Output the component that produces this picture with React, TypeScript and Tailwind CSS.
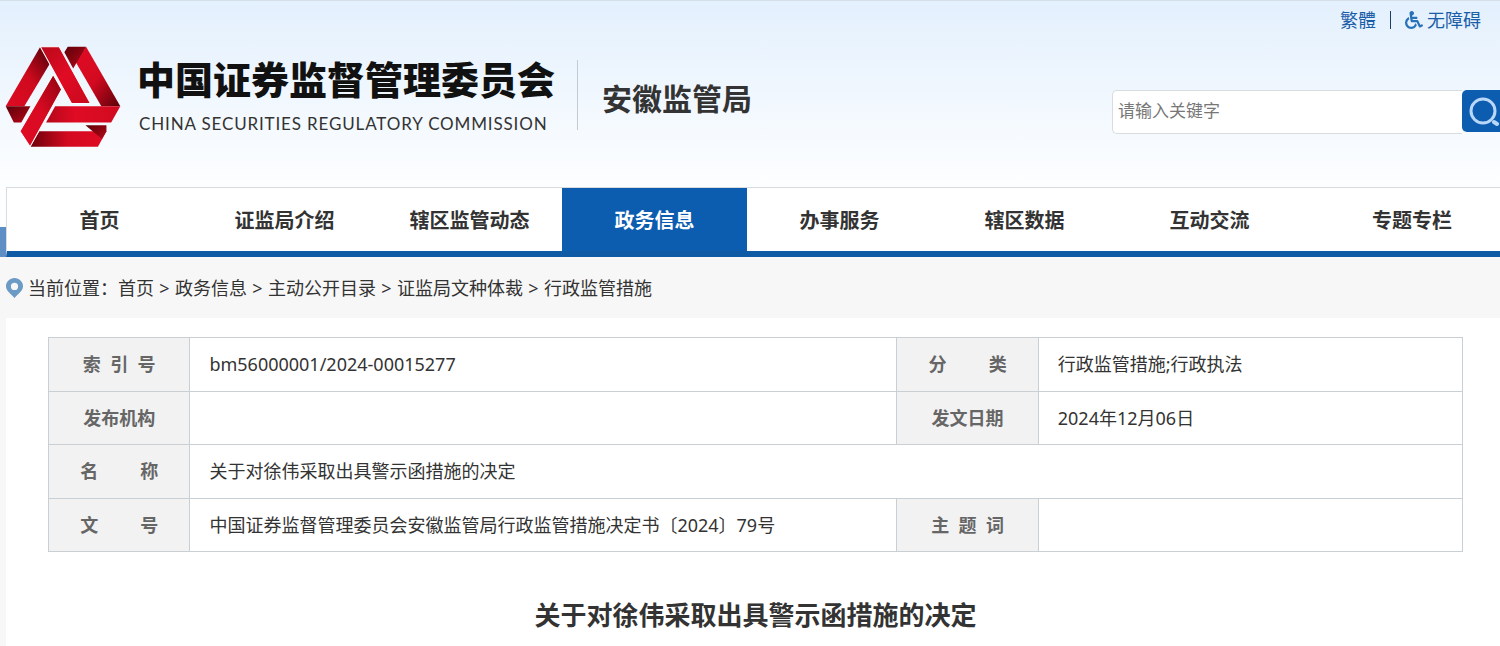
import { FaWheelchair } from "react-icons/fa";

const navItems = [
  "首页",
  "证监局介绍",
  "辖区监管动态",
  "政务信息",
  "办事服务",
  "辖区数据",
  "互动交流",
  "专题专栏",
];

const crumbs = [
  "首页",
  "政务信息",
  "主动公开目录",
  "证监局文种体裁",
  "行政监管措施",
];

const Logo = () => {
  return (
    <svg width="116" height="102" viewBox="18 32 342 300" aria-hidden="true">
      <defs>
        <linearGradient id="left" x1="0" y1="1" x2="1" y2="0">
          <stop offset="0" stopColor="#dd0a22" />
          <stop offset="0.5" stopColor="#cf0a1e" />
          <stop offset="1" stopColor="#4d0006" />
        </linearGradient>
        <linearGradient id="right" x1="0" y1="0" x2="1" y2="1">
          <stop offset="0" stopColor="#e00b24" />
          <stop offset="0.5" stopColor="#d40a20" />
          <stop offset="1" stopColor="#5a0008" />
        </linearGradient>
        <linearGradient id="inner" x1="0" y1="0" x2="1" y2="1">
          <stop offset="0" stopColor="#b8081a" />
          <stop offset="0.5" stopColor="#e00b24" />
          <stop offset="1" stopColor="#c8091d" />
        </linearGradient>
        <linearGradient id="slant" x1="1" y1="0" x2="0" y2="1">
          <stop offset="0" stopColor="#8e0412" />
          <stop offset="0.5" stopColor="#d80a21" />
          <stop offset="1" stopColor="#e00b24" />
        </linearGradient>
        <linearGradient id="bar" x1="0" y1="0" x2="1" y2="0">
          <stop offset="0" stopColor="#b5071a" />
          <stop offset="0.4" stopColor="#e00b24" />
          <stop offset="1" stopColor="#d00a1f" />
        </linearGradient>
        <linearGradient id="base" x1="0" y1="0" x2="1" y2="0">
          <stop offset="0" stopColor="#6d000a" />
          <stop offset="0.5" stopColor="#d40a20" />
          <stop offset="1" stopColor="#e00b24" />
        </linearGradient>
        <linearGradient id="fold" x1="0" y1="0" x2="1" y2="1">
          <stop offset="0" stopColor="#5c0008" />
          <stop offset="1" stopColor="#b8081a" />
        </linearGradient>
      </defs>
      <path d="M122 34L150 84L75 209H20Z" fill="url(#left)" />
      <path d="M20 209H93L66 257H44Z" fill="url(#fold)" />
      <path d="M257 34L358 209H302L226 78Z" fill="url(#right)" />
      <path d="M203 34H257L219 98L193 50Z" fill="url(#fold)" />
      <path d="M166 209H358L331 257H139Z" fill="url(#bar)" />
      <path d="M119 283H317L292 329H92Z" fill="url(#base)" />
      <path d="M255 265H317V283L304 306Z" fill="url(#fold)" />
      <g stroke="#fff" strokeWidth="3">
        <path d="M122 34H178L270 201H214Z" fill="url(#inner)" />
        <path d="M160 116L185 160L92 329L62 283Z" fill="url(#slant)" />
      </g>
    </svg>
  );
};

const SearchIcon = () => {
  return (
    <svg
      className="shrink-0"
      width="30"
      height="30"
      viewBox="0 0 30 30"
      fill="none"
      stroke="#b9d7f8"
      aria-hidden="true"
    >
      <circle cx="14" cy="14" r="12" strokeWidth="3" />
      <path d="M25 25L28 27" strokeWidth="4" strokeLinecap="round" />
    </svg>
  );
};

const PinIcon = () => {
  return (
    <svg width="17" height="20" viewBox="0 0 17 20" aria-hidden="true">
      <path
        fillRule="evenodd"
        fill="#6b9ac4"
        d="M8.500 0C3.800 0 0 3.700 0 8.300C0 13 5 16 8.500 20C12 16 17 13 17 8.300C17 3.700 13.200 0 8.500 0ZM8.500 4.800A3.600 3.600 0 1 1 8.500 12A3.600 3.600 0 1 1 8.500 4.800Z"
      />
    </svg>
  );
};

const Label = ({ text }: { text: string }) => {
  return (
    <th
      scope="row"
      className="border border-[#c9d0d5] bg-[#f2f2f2] p-0 text-center font-bold whitespace-pre text-[#666]"
    >
      {text}
    </th>
  );
};

const Value = ({ text, span }: { text?: string; span?: number }) => {
  return (
    <td colSpan={span} className="border border-[#c9d0d5] py-0 pr-2 pl-[19px]">
      {text}
    </td>
  );
};

const Header = () => {
  return (
    <header className="border-t border-[#d5dde6] bg-linear-to-b from-[#e3f0fd] to-[#fdfeff]">
      <div className="flex h-[38px] items-center justify-end pr-[19px] text-lg text-[#1b5ea8]">
        <a href="#">繁體</a>
        <span className="mx-[14px] h-[18px] w-px bg-[#1d3f66]"></span>
        <a href="#" className="flex items-center gap-1">
          <FaWheelchair size={18} color="#2a72b8" />
          无障碍
        </a>
      </div>
      <div className="flex h-[148px] items-start justify-between">
        <div className="flex items-start pt-[7px] pl-[5px]">
          <Logo />
          <div className="ml-4 pt-[9px]">
            <h1 className="text-[38px] leading-[48px] font-black text-[#111]">
              中国证券监督管理委员会
            </h1>
            <p className="pl-[2px] font-['Lato',sans-serif] text-[17px] leading-[42px] tracking-wider text-[#333]">
              CHINA SECURITIES REGULATORY COMMISSION
            </p>
          </div>
          <div className="mt-[14px] ml-[22px] flex h-[70px] items-center border-l border-[#c5cad1] pl-6">
            <h2 className="pt-2 text-3xl font-bold text-[#333]">安徽监管局</h2>
          </div>
        </div>
        <form
          className="flex items-start pt-[51px]"
          onSubmit={(e) => e.preventDefault()}
        >
          <input
            type="text"
            aria-label="请输入关键字"
            placeholder="请输入关键字"
            className="h-11 w-[350px] rounded-l-[5px] border border-r-0 border-[#d8dcdf] bg-white px-[5px] pb-[3px] text-[17px] outline-none placeholder:text-[#777]"
          />
          <button
            type="submit"
            aria-label="搜索"
            className="flex h-[42px] w-[38px] items-center rounded-l-[5px] bg-[#0c5cb0] pt-[2px] pl-[7px]"
          >
            <SearchIcon />
          </button>
        </form>
      </div>
    </header>
  );
};

const Nav = () => {
  return (
    <div className="flex bg-[#fdfeff]">
      <div className="flex w-[6px] flex-col justify-end">
        <div className="h-[30px] bg-[#5d8fc5]"></div>
      </div>
      <nav className="grid h-[70px] flex-1 grid-cols-[repeat(7,185fr)_198fr] border-t border-b-6 border-l border-t-[#d9dcdf] border-b-[#0e5aa5] border-l-[#d9dcdf] bg-white text-xl font-bold text-[#333]">
        {navItems.map((item) => (
          <a
            key={item}
            href="#"
            className={
              item === "政务信息"
                ? "flex items-center justify-center bg-[#0c5cb0] pt-[2px] text-white"
                : "flex items-center justify-center pt-[2px] last:pl-[22px]"
            }
          >
            {item}
          </a>
        ))}
      </nav>
    </div>
  );
};

export default function App() {
  return (
    <div
      lang="zh-CN"
      className="min-h-screen bg-[#f7f7f7] font-['Noto_Sans','Noto_Sans_CJK_SC',sans-serif] text-[#333]"
    >
      <Header />
      <Nav />
      <div className="flex h-[61px] items-center pl-[6px] text-lg">
        <PinIcon />
        <span className="pl-[5px]">当前位置：</span>
        {crumbs.map((crumb, index) => (
          <span key={crumb} className="flex">
            {index > 0 && <span className="w-[21px] text-center">&gt;</span>}
            <a href="#">{crumb}</a>
          </span>
        ))}
      </div>
      <main className="ml-[6px] bg-white pt-[19px] pr-[37px] pb-4 pl-[42px]">
        <table className="h-[215px] w-full table-fixed border-collapse text-lg">
          <colgroup>
            <col className="w-[10%]" />
            <col className="w-[50%]" />
            <col className="w-[10%]" />
            <col className="w-[30%]" />
          </colgroup>
          <tbody>
            <tr>
              <Label text="索  引  号" />
              <Value text="bm56000001/2024-00015277" />
              <Label text="分         类" />
              <Value text="行政监管措施;行政执法" />
            </tr>
            <tr>
              <Label text="发布机构" />
              <Value />
              <Label text="发文日期" />
              <Value text="2024年12月06日" />
            </tr>
            <tr>
              <Label text="名         称" />
              <Value text="关于对徐伟采取出具警示函措施的决定" span={3} />
            </tr>
            <tr>
              <Label text="文         号" />
              <Value text="中国证券监督管理委员会安徽监管局行政监管措施决定书〔2024〕79号" />
              <Label text="主  题  词" />
              <Value />
            </tr>
          </tbody>
        </table>
        <h3 className="pt-[43px] text-center text-[26px] leading-10 font-bold">
          关于对徐伟采取出具警示函措施的决定
        </h3>
      </main>
    </div>
  );
}
